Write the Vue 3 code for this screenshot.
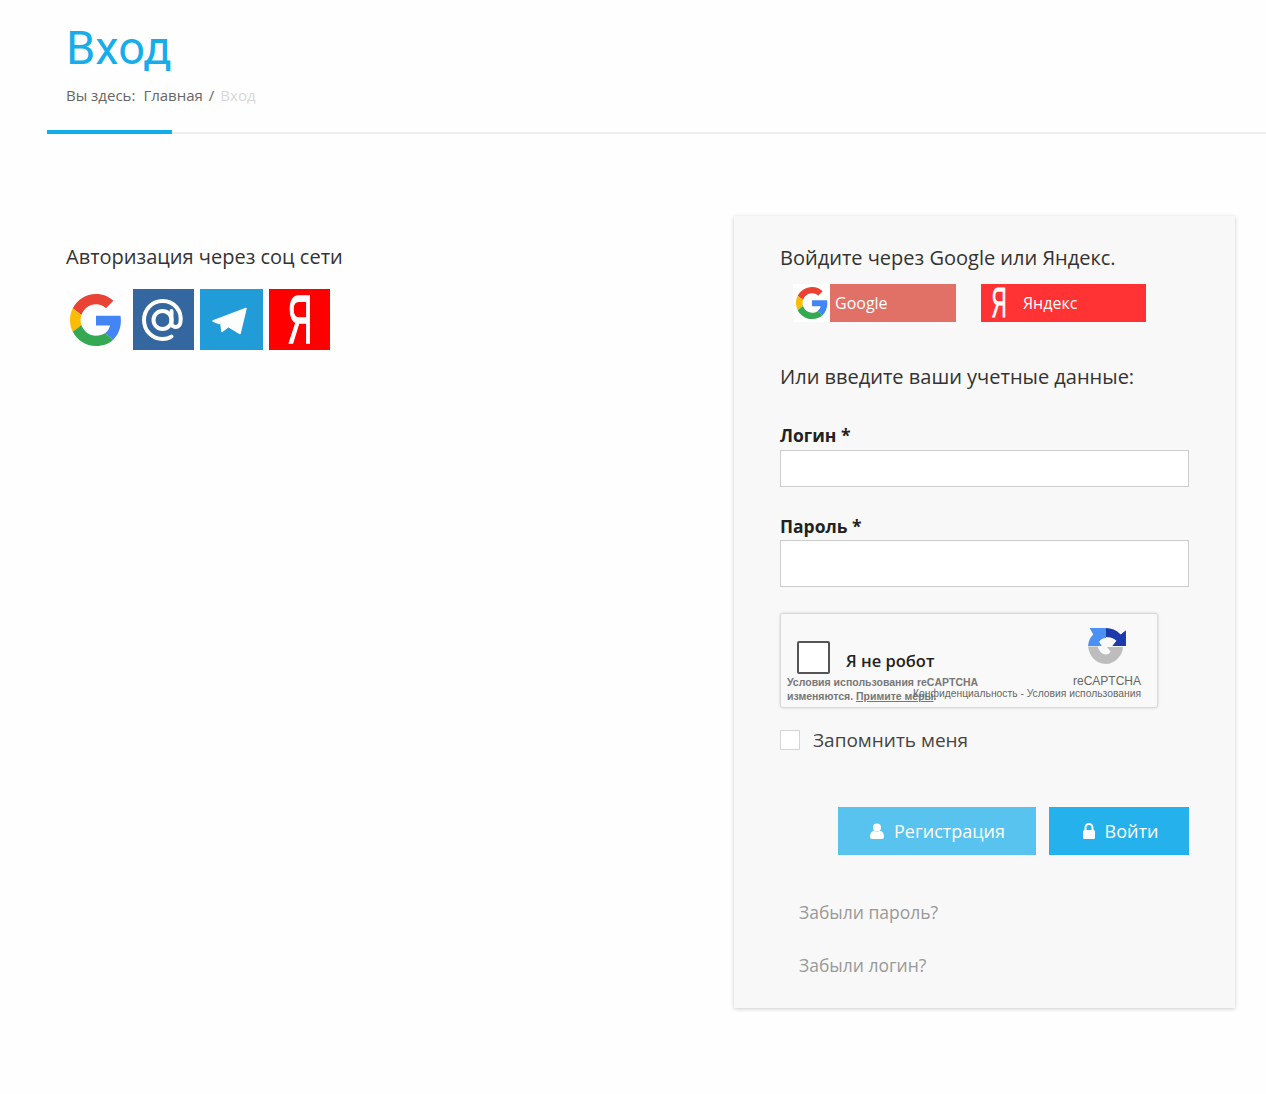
<template>
  <div class="page">
    <header class="page-head">
      <h1>Вход</h1>
      <div class="crumbs">
        <span>Вы здесь:</span>
        <a class="home">Главная</a>
        <span class="sep">/</span>
        <span class="current">Вход</span>
      </div>
    </header>
    <div class="rule"><span class="rule-bar"></span><span class="rule-line"></span></div>

    <main class="content">
      <section class="social">
        <p class="social-title">Авторизация через соц сети</p>
        <div class="social-icons">
          <span class="tile tile-google">
            <svg viewBox="0 0 48 48" width="52" height="52">
              <path v-for="p in googlePaths" :key="p.fill" :fill="p.fill" :d="p.d" />
            </svg>
          </span>
          <span class="tile tile-mail">
            <svg viewBox="0 0 61 61" width="61" height="61" fill="none" stroke="#fff" stroke-width="4" stroke-linecap="round">
              <circle cx="29.500" cy="31" r="9" />
              <path d="M38.500 22V34c0 5.500 8 5.500 9-1 1.600-11-6-21-18-21-10.500 0-18.500 8.500-18.500 19s8 19 18.500 19c4 0 7-1 9-2.500" />
            </svg>
          </span>
          <span class="tile tile-telegram">
            <svg viewBox="0 0 63 61" width="63" height="61">
              <path fill="#fff" stroke="#fff" stroke-width="1.500" stroke-linejoin="round" d="M13 32 46 19.500 40 44.500 28.500 37.500 22 42.500 21 35.500 38 24.500 19 34.500z" />
            </svg>
          </span>
          <span class="tile tile-yandex"><span class="ya-glyph">Я</span></span>
        </div>
      </section>

      <form class="login-card" @submit.prevent>
        <p class="lead">Войдите через Google или Яндекс.</p>
        <div class="oauth">
          <a class="oauth-btn oauth-google">
            <span class="oauth-icon">
              <svg viewBox="0 0 48 48" width="32" height="32">
                <path v-for="p in googlePaths" :key="p.fill" :fill="p.fill" :d="p.d" />
              </svg>
            </span>
            <span class="oauth-label">Google</span>
          </a>
          <a class="oauth-btn oauth-yandex">
            <span class="oauth-ya"><span class="ya-glyph-small">Я</span></span>
            <span class="oauth-label">Яндекс</span>
          </a>
        </div>

        <p class="lead lead-creds">Или введите ваши учетные данные:</p>

        <label class="field-label" for="login">Логин *</label>
        <input id="login" class="input" type="text" />

        <label class="field-label label-pass" for="password">Пароль *</label>
        <input id="password" class="input input-tall" type="password" />

        <div class="captcha">
          <div class="captcha-top">
            <span class="captcha-box"></span>
            <span class="captcha-text">Я не робот</span>
            <div class="captcha-logo">
              <svg viewBox="2 0 38 36" width="40" height="38">
                <path fill="#4a90f5" d="M3 18C3.500 13 5 9.500 8 7L4.500 1H20V10.500C17 10.500 15 12 13.500 14L16 18Z" />
                <path fill="#1c3aa9" d="M20 1C25 1 30 3 34 7L39 3V18H26L30 13C28 11 24 9.500 20 9.500Z" />
                <path fill="#bdbdbd" d="M3 18.500H12.500C13 22 15.500 26 20 26C22 26 23.500 25 24.500 23.500L21 19H36C36 24 34 27 31 30C28 33 24 35 20 35C10 35 4 27 3 18.500Z" />
              </svg>
              <span class="captcha-brand">reCAPTCHA</span>
            </div>
          </div>
          <div class="captcha-bottom">
            <div class="captcha-notice">
              Условия использования reCAPTCHA<br />изменяются. <u>Примите меры</u>.
            </div>
            <div class="captcha-links">Конфиденциальность - Условия использования</div>
          </div>
        </div>

        <label class="remember">
          <span class="remember-box"></span>
          <span>Запомнить меня</span>
        </label>

        <div class="actions">
          <button class="btn btn-register" type="button">
            <svg viewBox="0 0 16 16" width="16" height="16" fill="#fff">
              <circle cx="8" cy="4.500" r="4" />
              <path d="M1 14c0-4 2-6 4-6.200 2 1.400 4 1.400 6 0 2 .2 4 2.200 4 6.200 0 1-1 2-2 2H3c-1 0-2-1-2-2z" />
            </svg>
            Регистрация
          </button>
          <button class="btn btn-login" type="submit">
            <svg viewBox="0 0 14 16" width="14" height="16">
              <path fill="none" stroke="#fff" stroke-width="2" d="M3.500 8V4.500a3.500 3.500 0 0 1 7 0V8" />
              <rect x="1" y="7" width="12" height="9" rx="1.500" fill="#fff" />
            </svg>
            Войти
          </button>
        </div>

        <a class="forgot">Забыли пароль?</a>
        <a class="forgot forgot-second">Забыли логин?</a>
      </form>
    </main>
  </div>
</template>

<script setup>
const googlePaths = [
  { fill: "#ea4335", d: "M24 9.500c3.540 0 6.710 1.220 9.210 3.600l6.850-6.850C35.900 2.380 30.470 0 24 0 14.620 0 6.510 5.380 2.560 13.220l7.980 6.190C12.430 13.720 17.740 9.500 24 9.500z" },
  { fill: "#4285f4", d: "M46.980 24.550c0-1.570-.150-3.090-.380-4.550H24v9.020h12.940c-.580 2.960-2.260 5.480-4.780 7.180l7.730 6c4.510-4.180 7.090-10.360 7.090-17.650z" },
  { fill: "#fbbc05", d: "M10.530 28.590c-.480-1.450-.760-2.990-.760-4.590s.270-3.140.760-4.590l-7.980-6.190C.920 16.460 0 20.120 0 24c0 3.880.920 7.540 2.560 10.780l7.970-6.190z" },
  { fill: "#34a853", d: "M24 48c6.480 0 11.930-2.130 15.890-5.810l-7.730-6c-2.150 1.450-4.920 2.300-8.160 2.300-6.260 0-11.570-4.220-13.470-9.910l-7.980 6.190C6.510 42.620 14.620 48 24 48z" },
];
</script>

<style>
html,
body {
  margin: 0;
  background: #fefefe;
}
</style>

<style scoped>
.page {
  width: 1266px;
  height: 1094px;
  overflow: hidden;
  font-family: "Open Sans", "Liberation Sans", sans-serif;
  color: #333;
}

.page-head {
  padding: 22px 0 0 66px;
  height: 130px;
  box-sizing: border-box;
}

h1 {
  margin: 0;
  font-family: Roboto, "Open Sans", sans-serif;
  font-size: 47px;
  line-height: 52px;
  font-weight: 400;
  color: #16aeea;
}

.crumbs {
  margin-top: 12px;
  display: flex;
  font-size: 15px;
  line-height: 18px;
  color: #666;
}

.home {
  margin-left: 8px;
}

.sep {
  margin: 0 6px;
}

.current {
  color: #d8d8d8;
}

.rule {
  margin-left: 47px;
  display: flex;
  align-items: flex-end;
}

.rule-bar {
  width: 125px;
  height: 4px;
  background: #12ade9;
}

.rule-line {
  flex: 1;
  height: 2px;
  background: #eee;
}

.content {
  display: flex;
  justify-content: space-between;
  align-items: flex-start;
  padding: 82px 31px 0 66px;
}

.social {
  padding-top: 27px;
}

.social-title {
  margin: 0;
  font-size: 20px;
  line-height: 28px;
}

.social-icons {
  margin-top: 18px;
  display: flex;
  gap: 6px;
}

.tile {
  display: flex;
  align-items: center;
  justify-content: center;
  height: 61px;
}

.tile-google {
  width: 61px;
}

.tile-google svg {
  margin-left: -2px;
}

.tile-mail {
  width: 61px;
  background: #34669f;
}

.tile-telegram {
  width: 63px;
  background: #219cd9;
}

.tile-yandex {
  width: 61px;
  background: #fe0000;
  color: #fff;
  font-family: "Liberation Sans", sans-serif;
}

.ya-glyph {
  display: inline-block;
  font-size: 69px;
  line-height: 61px;
  -webkit-text-stroke: 1.500px #fff;
  transform: scaleX(0.5);
}

.login-card {
  width: 501px;
  height: 792px;
  box-sizing: border-box;
  padding: 28px 46px 0;
  background: #f8f8f8;
  box-shadow: 0 1px 4px rgba(0, 0, 0, 0.2);
}

.lead {
  margin: 0;
  font-size: 20px;
  line-height: 28px;
}

.oauth {
  margin-top: 12px;
  padding-left: 13px;
  display: flex;
  gap: 25px;
  height: 38px;
}

.oauth-btn {
  display: flex;
  align-items: center;
  height: 38px;
  color: #fff;
  font-size: 16px;
  font-weight: 500;
}

.oauth-google {
  width: 163px;
  background: #e17066;
}

.oauth-icon {
  width: 37px;
  height: 38px;
  flex: none;
  display: flex;
  align-items: center;
  justify-content: center;
  background: #fff;
}

.oauth-google .oauth-label {
  margin-left: 5px;
}

.oauth-yandex {
  width: 165px;
  background: #ff3333;
}

.oauth-ya {
  width: 42px;
  flex: none;
  display: flex;
  justify-content: center;
  margin-left: -3px;
  margin-right: 3px;
  font-family: "Liberation Sans", sans-serif;
}

.ya-glyph-small {
  display: inline-block;
  font-size: 42px;
  line-height: 38px;
  -webkit-text-stroke: 0.800px #fff;
  transform: scaleX(0.5);
}

.lead-creds {
  margin-top: 41px;
}

.field-label {
  display: block;
  margin-top: 33px;
  font-size: 17.500px;
  line-height: 22px;
  font-weight: 700;
  color: #222;
}

.label-pass {
  margin-top: 28px;
}

.input {
  display: block;
  width: 409px;
  height: 37px;
  box-sizing: border-box;
  margin: 4px 0 0;
  padding: 0 10px;
  border: 1px solid #ccc;
  background: #fff;
}

.input-tall {
  height: 47px;
  margin-top: 3px;
}

.captcha {
  margin-top: 26px;
  width: 378px;
  height: 95px;
  box-sizing: border-box;
  padding: 13px 16px 0 6px;
  border: 1px solid #d9d9d9;
  border-radius: 3px;
  background: #f9f9f9;
  box-shadow: 0 0 3px rgba(0, 0, 0, 0.15);
}

.captcha-top {
  display: flex;
  align-items: flex-start;
  height: 53px;
}

.captcha-box {
  width: 33px;
  height: 33px;
  box-sizing: border-box;
  margin: 14px 0 0 10px;
  border: 2px solid #555;
  border-radius: 2px;
  background: #fff;
}

.captcha-text {
  margin: 23px 0 0 16px;
  font-size: 16.500px;
  line-height: 22px;
  font-weight: 600;
  color: #222;
}

.captcha-logo {
  margin-left: auto;
  display: flex;
  flex-direction: column;
  align-items: center;
  font-family: "Liberation Sans", sans-serif;
}

.captcha-brand {
  margin-top: 9px;
  font-size: 12px;
  line-height: 14px;
  color: #666;
}

.captcha-bottom {
  position: relative;
  margin-top: -5px;
  font-family: "Liberation Sans", sans-serif;
  color: #666;
}

.captcha-notice {
  font-size: 10.500px;
  line-height: 14px;
  font-weight: 700;
  color: #777;
}

.captcha-links {
  position: absolute;
  right: 0;
  top: 13px;
  font-size: 10.300px;
  line-height: 12px;
}

.remember {
  margin-top: 20px;
  display: flex;
  align-items: center;
  gap: 13px;
  font-size: 19px;
  line-height: 24px;
  color: #444;
}

.remember-box {
  width: 20px;
  height: 20px;
  box-sizing: border-box;
  border: 1px solid #d5d5d5;
  background: #fff;
}

.actions {
  margin-top: 55px;
  display: flex;
  justify-content: flex-end;
  gap: 13px;
}

.btn {
  display: flex;
  align-items: center;
  justify-content: center;
  gap: 9px;
  height: 48px;
  border: 0;
  padding: 0;
  color: #fff;
  font-family: inherit;
  font-size: 18px;
}

.btn-register {
  width: 198px;
  background: #58c3ef;
}

.btn-login {
  width: 140px;
  padding-left: 2px;
  background: #25b2ec;
}

.forgot {
  display: block;
  margin: 45px 0 0 19px;
  font-size: 17.500px;
  line-height: 24px;
  color: #999;
}

.forgot-second {
  margin-top: 29px;
}
</style>
